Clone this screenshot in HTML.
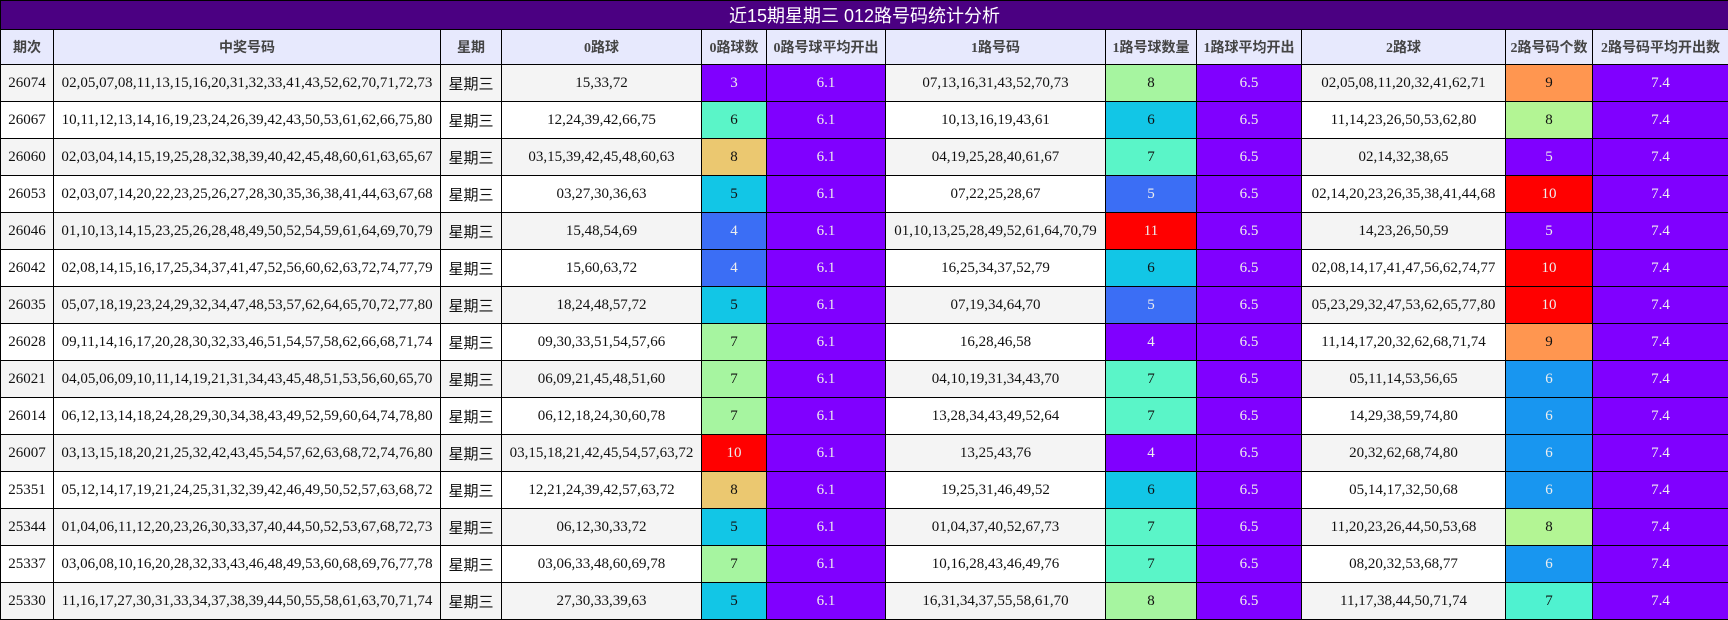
<!DOCTYPE html>
<html><head><meta charset="utf-8"><style>
*{margin:0;padding:0;box-sizing:border-box}
body{width:1728px;height:619px;background:#fff;overflow:hidden;font-family:"Liberation Serif","Noto Serif CJK SC","Noto Sans CJK SC",serif}
table{border-collapse:collapse;table-layout:fixed;width:1728px}
td,th{border:1.5px solid #000;text-align:center;font-size:15px;color:#111;white-space:nowrap;overflow:hidden}
.title td{height:29px;background:#4b0082;color:#fff;font-size:18px;font-family:"Liberation Sans","Noto Sans CJK SC",sans-serif}
th{height:35px;background:#e7e9fd;color:#444;font-weight:bold;font-family:"Liberation Serif","Noto Sans CJK SC",sans-serif;font-size:14px}
tr.r td{height:37px}
tr.r:nth-child(odd) td{background:#f4f4f4}
tr.r:nth-child(even) td{background:#fff}
tr.r td.wk{font-family:"Liberation Sans","Noto Sans CJK SC",sans-serif;font-size:15px}
tr.r td.P{background:#8000ff;color:#eee}
tr.r td.B{background:#3b6ef5;color:#eee}
tr.r td.C{background:#12c6e6}
tr.r td.T{background:#5af5c8}
tr.r td.G{background:#a6f5a0}
tr.r td.Y{background:#ebc870}
tr.r td.R{background:#ff0000;color:#eee}
tr.r td.O{background:#ff9650}
tr.r td.B2{background:#1896f0;color:#eee}
tr.r td.T2{background:#4ff2d0}
tr.r td.G2{background:#b3f594}
</style></head><body>
<table>
<colgroup><col style="width:53px"><col style="width:387px"><col style="width:61px"><col style="width:200px"><col style="width:65px"><col style="width:119px"><col style="width:220px"><col style="width:91px"><col style="width:105px"><col style="width:204px"><col style="width:87px"><col style="width:136px"></colgroup>
<tr class="title"><td colspan="12">近15期星期三 012路号码统计分析</td></tr>
<tr><th>期次</th><th>中奖号码</th><th>星期</th><th>0路球</th><th>0路球数</th><th>0路号球平均开出</th><th>1路号码</th><th>1路号球数量</th><th>1路球平均开出</th><th>2路球</th><th>2路号码个数</th><th>2路号码平均开出数</th></tr>
<tbody id="b">
<tr class="r"><td>26074</td><td>02,05,07,08,11,13,15,16,20,31,32,33,41,43,52,62,70,71,72,73</td><td class="wk">星期三</td><td>15,33,72</td><td class="P">3</td><td class="P">6.1</td><td>07,13,16,31,43,52,70,73</td><td class="G">8</td><td class="P">6.5</td><td>02,05,08,11,20,32,41,62,71</td><td class="O">9</td><td class="P">7.4</td></tr>
<tr class="r"><td>26067</td><td>10,11,12,13,14,16,19,23,24,26,39,42,43,50,53,61,62,66,75,80</td><td class="wk">星期三</td><td>12,24,39,42,66,75</td><td class="T">6</td><td class="P">6.1</td><td>10,13,16,19,43,61</td><td class="C">6</td><td class="P">6.5</td><td>11,14,23,26,50,53,62,80</td><td class="G2">8</td><td class="P">7.4</td></tr>
<tr class="r"><td>26060</td><td>02,03,04,14,15,19,25,28,32,38,39,40,42,45,48,60,61,63,65,67</td><td class="wk">星期三</td><td>03,15,39,42,45,48,60,63</td><td class="Y">8</td><td class="P">6.1</td><td>04,19,25,28,40,61,67</td><td class="T">7</td><td class="P">6.5</td><td>02,14,32,38,65</td><td class="P">5</td><td class="P">7.4</td></tr>
<tr class="r"><td>26053</td><td>02,03,07,14,20,22,23,25,26,27,28,30,35,36,38,41,44,63,67,68</td><td class="wk">星期三</td><td>03,27,30,36,63</td><td class="C">5</td><td class="P">6.1</td><td>07,22,25,28,67</td><td class="B">5</td><td class="P">6.5</td><td>02,14,20,23,26,35,38,41,44,68</td><td class="R">10</td><td class="P">7.4</td></tr>
<tr class="r"><td>26046</td><td>01,10,13,14,15,23,25,26,28,48,49,50,52,54,59,61,64,69,70,79</td><td class="wk">星期三</td><td>15,48,54,69</td><td class="B">4</td><td class="P">6.1</td><td>01,10,13,25,28,49,52,61,64,70,79</td><td class="R">11</td><td class="P">6.5</td><td>14,23,26,50,59</td><td class="P">5</td><td class="P">7.4</td></tr>
<tr class="r"><td>26042</td><td>02,08,14,15,16,17,25,34,37,41,47,52,56,60,62,63,72,74,77,79</td><td class="wk">星期三</td><td>15,60,63,72</td><td class="B">4</td><td class="P">6.1</td><td>16,25,34,37,52,79</td><td class="C">6</td><td class="P">6.5</td><td>02,08,14,17,41,47,56,62,74,77</td><td class="R">10</td><td class="P">7.4</td></tr>
<tr class="r"><td>26035</td><td>05,07,18,19,23,24,29,32,34,47,48,53,57,62,64,65,70,72,77,80</td><td class="wk">星期三</td><td>18,24,48,57,72</td><td class="C">5</td><td class="P">6.1</td><td>07,19,34,64,70</td><td class="B">5</td><td class="P">6.5</td><td>05,23,29,32,47,53,62,65,77,80</td><td class="R">10</td><td class="P">7.4</td></tr>
<tr class="r"><td>26028</td><td>09,11,14,16,17,20,28,30,32,33,46,51,54,57,58,62,66,68,71,74</td><td class="wk">星期三</td><td>09,30,33,51,54,57,66</td><td class="G">7</td><td class="P">6.1</td><td>16,28,46,58</td><td class="P">4</td><td class="P">6.5</td><td>11,14,17,20,32,62,68,71,74</td><td class="O">9</td><td class="P">7.4</td></tr>
<tr class="r"><td>26021</td><td>04,05,06,09,10,11,14,19,21,31,34,43,45,48,51,53,56,60,65,70</td><td class="wk">星期三</td><td>06,09,21,45,48,51,60</td><td class="G">7</td><td class="P">6.1</td><td>04,10,19,31,34,43,70</td><td class="T">7</td><td class="P">6.5</td><td>05,11,14,53,56,65</td><td class="B2">6</td><td class="P">7.4</td></tr>
<tr class="r"><td>26014</td><td>06,12,13,14,18,24,28,29,30,34,38,43,49,52,59,60,64,74,78,80</td><td class="wk">星期三</td><td>06,12,18,24,30,60,78</td><td class="G">7</td><td class="P">6.1</td><td>13,28,34,43,49,52,64</td><td class="T">7</td><td class="P">6.5</td><td>14,29,38,59,74,80</td><td class="B2">6</td><td class="P">7.4</td></tr>
<tr class="r"><td>26007</td><td>03,13,15,18,20,21,25,32,42,43,45,54,57,62,63,68,72,74,76,80</td><td class="wk">星期三</td><td>03,15,18,21,42,45,54,57,63,72</td><td class="R">10</td><td class="P">6.1</td><td>13,25,43,76</td><td class="P">4</td><td class="P">6.5</td><td>20,32,62,68,74,80</td><td class="B2">6</td><td class="P">7.4</td></tr>
<tr class="r"><td>25351</td><td>05,12,14,17,19,21,24,25,31,32,39,42,46,49,50,52,57,63,68,72</td><td class="wk">星期三</td><td>12,21,24,39,42,57,63,72</td><td class="Y">8</td><td class="P">6.1</td><td>19,25,31,46,49,52</td><td class="C">6</td><td class="P">6.5</td><td>05,14,17,32,50,68</td><td class="B2">6</td><td class="P">7.4</td></tr>
<tr class="r"><td>25344</td><td>01,04,06,11,12,20,23,26,30,33,37,40,44,50,52,53,67,68,72,73</td><td class="wk">星期三</td><td>06,12,30,33,72</td><td class="C">5</td><td class="P">6.1</td><td>01,04,37,40,52,67,73</td><td class="T">7</td><td class="P">6.5</td><td>11,20,23,26,44,50,53,68</td><td class="G2">8</td><td class="P">7.4</td></tr>
<tr class="r"><td>25337</td><td>03,06,08,10,16,20,28,32,33,43,46,48,49,53,60,68,69,76,77,78</td><td class="wk">星期三</td><td>03,06,33,48,60,69,78</td><td class="G">7</td><td class="P">6.1</td><td>10,16,28,43,46,49,76</td><td class="T">7</td><td class="P">6.5</td><td>08,20,32,53,68,77</td><td class="B2">6</td><td class="P">7.4</td></tr>
<tr class="r"><td>25330</td><td>11,16,17,27,30,31,33,34,37,38,39,44,50,55,58,61,63,70,71,74</td><td class="wk">星期三</td><td>27,30,33,39,63</td><td class="C">5</td><td class="P">6.1</td><td>16,31,34,37,55,58,61,70</td><td class="G">8</td><td class="P">6.5</td><td>11,17,38,44,50,71,74</td><td class="T2">7</td><td class="P">7.4</td></tr>
</tbody></table>
</body></html>
